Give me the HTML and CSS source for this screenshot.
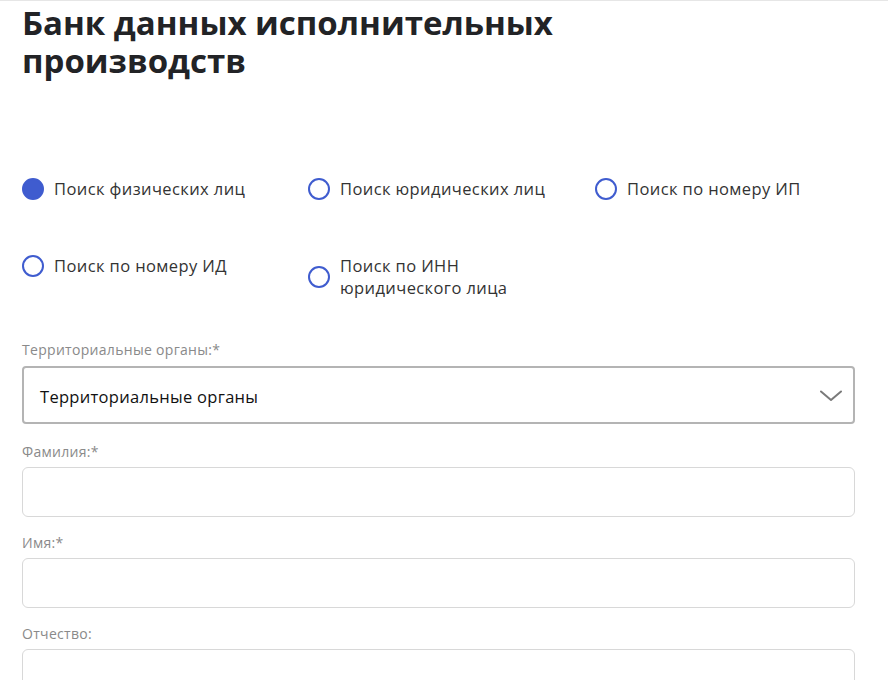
FILE: index.html
```html
<!DOCTYPE html>
<html lang="ru">
<head>
<meta charset="utf-8">
<title>Банк данных исполнительных производств</title>
<link rel="stylesheet" href="styles.css">
</head>
<body>
<main class="page">
  <h1 class="title">Банк данных исполнительных<br>производств</h1>

  <div class="radios">
    <label class="radio"><span class="dot checked"></span><span class="radio-text">Поиск физических лиц</span></label>
    <label class="radio"><span class="dot"></span><span class="radio-text">Поиск юридических лиц</span></label>
    <label class="radio"><span class="dot"></span><span class="radio-text">Поиск по номеру ИП</span></label>
    <label class="radio"><span class="dot"></span><span class="radio-text">Поиск по номеру ИД</span></label>
    <label class="radio"><span class="dot"></span><span class="radio-text">Поиск по ИНН<br>юридического лица</span></label>
  </div>

  <div class="field field-select">
    <div class="label">Территориальные органы:*</div>
    <div class="select">
      <span class="select-text">Территориальные органы</span>
      <svg class="chevron" width="22" height="12" viewBox="0 0 22 12"><path d="M1 1.5 L11 10 L21 1.5" fill="none" stroke="#7a7a7a" stroke-width="2" stroke-linecap="round" stroke-linejoin="round"/></svg>
    </div>
  </div>

  <div class="field field-after-select">
    <div class="label">Фамилия:*</div>
    <div class="input"></div>
  </div>
  <div class="field">
    <div class="label">Имя:*</div>
    <div class="input"></div>
  </div>
  <div class="field">
    <div class="label">Отчество:</div>
    <div class="input"></div>
  </div>
</main>
</body>
</html>
```
FILE: styles.css
```css
html, body {
  margin: 0;
  padding: 0;
  background: #fff;
}
body {
  border-top: 1px solid #e6e6e6;
  font-family: "Open Sans", "DejaVu Sans", sans-serif;
  color: #2b2b2b;
}
.page {
  padding: 0 33px 0 22px;
}
.title {
  margin: 0;
  padding-top: 3px;
  font-size: 33px;
  line-height: 38px;
  font-weight: 700;
  color: #222326;
}
.radios {
  margin-top: 98px;
  display: grid;
  grid-template-columns: 286px 287px 1fr;
  row-gap: 55px;
  align-items: start;
}
.radio {
  display: flex;
  align-items: center;
  gap: 10px;
}
.dot {
  width: 22px;
  height: 22px;
  box-sizing: border-box;
  border: 2px solid #3f5ccf;
  border-radius: 50%;
  flex: none;
}
.dot.checked {
  background: #3f5ccf;
}
.radio-text {
  font-size: 16.5px;
  letter-spacing: 0.4px;
  line-height: 22px;
  color: #333;
}
.field {
  margin-top: 17px;
}
.field-select {
  margin-top: 42px;
}
.field-after-select {
  margin-top: 19px;
}
.label {
  font-size: 14px;
  letter-spacing: 0.3px;
  line-height: 18px;
  color: #8a8a8a;
  margin-bottom: 6px;
}
.field-select .label {
  margin-bottom: 7px;
}
.select {
  height: 58px;
  box-sizing: border-box;
  border: 2px solid #b4b4b4;
  border-radius: 4px;
  display: flex;
  align-items: center;
  justify-content: space-between;
  padding: 2px 11px 0 16px;
}
.select-text {
  font-size: 16.5px;
  letter-spacing: 0.3px;
  color: #111;
}
.input {
  height: 50px;
  box-sizing: border-box;
  border: 1px solid #d8d8d8;
  border-radius: 6px;
}
```
